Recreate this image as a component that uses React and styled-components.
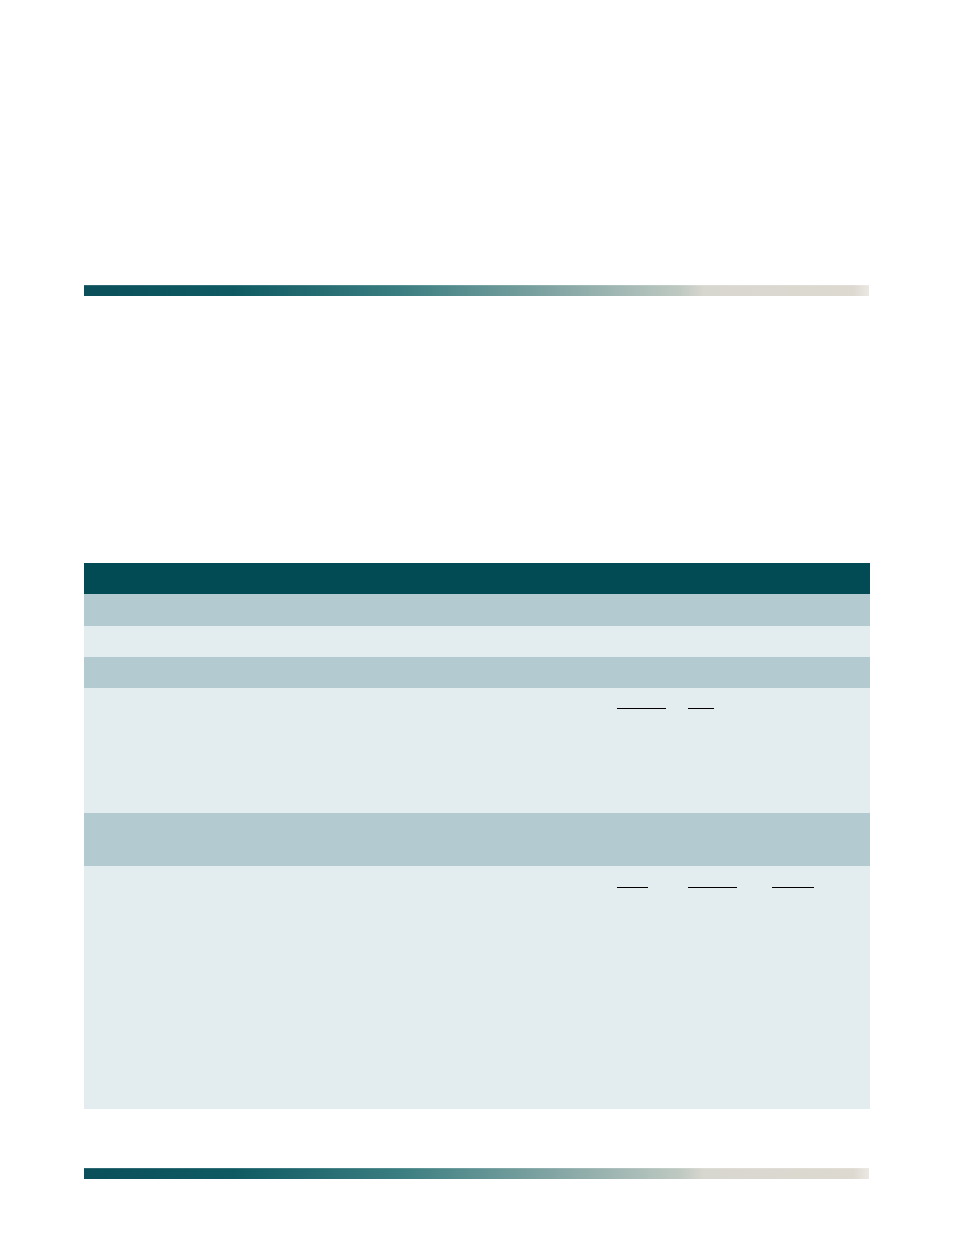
import React from 'react';
import styled, {createGlobalStyle} from 'styled-components';

const GlobalStyle = createGlobalStyle`
  body {
    margin: 0;
    background: #ffffff;
    font-family: "Liberation Sans", Arial, sans-serif;
  }
`;

const Page = styled.div`
  width: 954px;
  height: 1235px;
  padding: 285px 84px 0 84px;
  box-sizing: border-box;
  display: flex;
  flex-direction: column;
`;

const RuleBar = styled.div`
  height: 11px;
  width: 785px;
  margin-top: ${({top}) => top}px;
  background: linear-gradient(
    to right,
    #0a4f5a 0%,
    #0f5a62 19%,
    #3a7d80 40%,
    #7fa3a2 59%,
    #bfc9c2 76%,
    #d8d7cf 79%,
    #ddd9d1 98%,
    #ebe8e3 100%
  );
  box-shadow: inset 0 1px 0 rgba(255, 255, 255, 0.15);
`;

const Table = styled.div`
  margin-top: 267px;
  width: 786px;
  display: flex;
  flex-direction: column;
`;

const shades = {
  head: '#024b55',
  dark: '#b3cad0',
  light: '#e3ecee',
};

const Row = styled.div`
  height: ${({h}) => h}px;
  background: ${({tone}) => shades[tone]};
  display: flex;
  box-sizing: border-box;
  padding-top: ${({pad}) => pad || 0}px;
`;

const Label = styled.div`
  width: 533px;
`;

const Blanks = styled.div`
  display: flex;
  align-items: flex-start;
  height: 21px;
`;

const Blank = styled.span`
  display: block;
  width: ${({w}) => w}px;
  margin-left: ${({gap}) => gap}px;
  height: 21px;
  border-bottom: 1px solid #000;
  box-sizing: border-box;
`;

export default function App() {
  return (
    <>
      <GlobalStyle />
      <Page>
        <RuleBar top={0} />
        <Table>
          <Row tone="head" h={31} />
          <Row tone="dark" h={32} />
          <Row tone="light" h={31} />
          <Row tone="dark" h={31} />
          <Row tone="light" h={125}>
            <Label />
            <Blanks>
              <Blank w={49} gap={0} />
              <Blank w={26} gap={22} />
            </Blanks>
          </Row>
          <Row tone="dark" h={53} />
          <Row tone="light" h={243} pad={1}>
            <Label />
            <Blanks>
              <Blank w={31} gap={0} />
              <Blank w={49} gap={40} />
              <Blank w={42} gap={35} />
            </Blanks>
          </Row>
        </Table>
        <RuleBar top={59} />
      </Page>
    </>
  );
}
